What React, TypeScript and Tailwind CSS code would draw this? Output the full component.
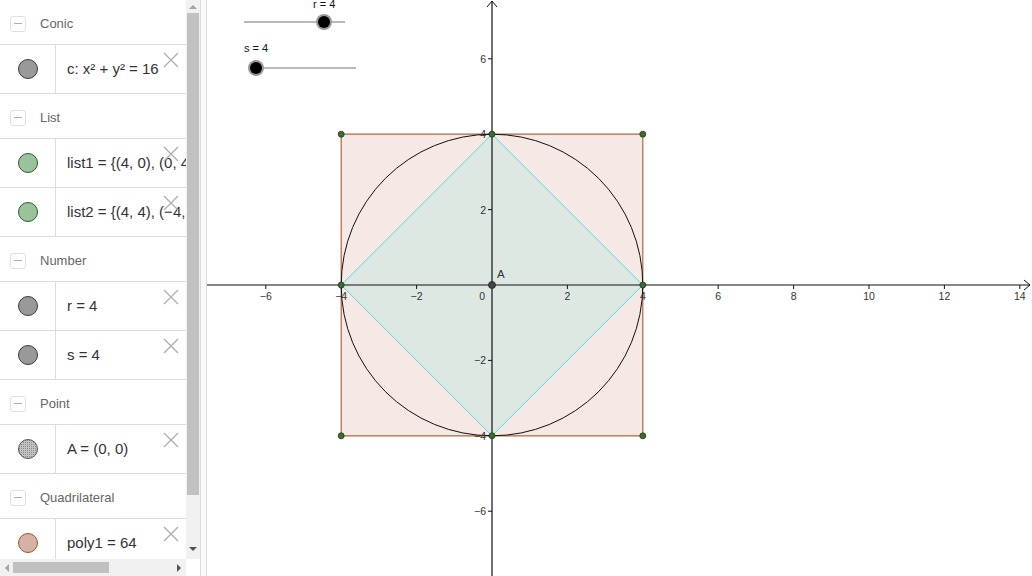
import React from 'react';

type Item = { text: string; fill: string; stroke: string; dotted?: boolean };
type Group = { title: string; items: Item[] };

const groups: Group[] = [
  { title: 'Conic', items: [{ text: 'c: x² + y² = 16', fill: '#999999', stroke: '#3a3a3a' }] },
  {
    title: 'List',
    items: [
      { text: 'list1 = {(4, 0), (0, 4), (−4, 0), (0, −4)}', fill: '#99c499', stroke: '#2e5a2e' },
      { text: 'list2 = {(4, 4), (−4, 4), (−4, −4), (4, −4)}', fill: '#99c499', stroke: '#2e5a2e' },
    ],
  },
  {
    title: 'Number',
    items: [
      { text: 'r = 4', fill: '#999999', stroke: '#3a3a3a' },
      { text: 's = 4', fill: '#999999', stroke: '#3a3a3a' },
    ],
  },
  { title: 'Point', items: [{ text: 'A = (0, 0)', fill: '#b8b8b8', stroke: '#555555', dotted: true }] },
  { title: 'Quadrilateral', items: [{ text: 'poly1 = 64', fill: '#d4b3a6', stroke: '#a0522d' }] },
];

const font = { fontFamily: '"Liberation Sans", Arial, sans-serif' };

const Header: React.FC<{ title: string }> = ({ title }) => (
  <div className="h-[45px] shrink-0 flex items-center pt-[3px] border-b border-[#dddddd]">
    <div className="ml-[10px] w-[16px] h-[16px] border border-[#e0e0e0] rounded-[3px] flex items-center justify-center">
      <div className="w-[8px] h-px bg-[#b0b0b0]" />
    </div>
    <span className="ml-[14px] text-[13px] text-[#666666]">{title}</span>
  </div>
);

const Row: React.FC<{ item: Item }> = ({ item }) => (
  <div className="h-[49px] shrink-0 flex border-b border-[#dddddd] relative">
    <div className="w-[56px] shrink-0 flex items-center justify-center border-r border-[#dddddd]">
      <svg width="22" height="22" viewBox="0 0 22 22">
        {item.dotted && (
          <defs>
            <pattern id="dots" width="2" height="2" patternUnits="userSpaceOnUse">
              <rect width="2" height="2" fill="#c4c4c4" />
              <rect width="1" height="1" fill="#8a8a8a" />
            </pattern>
          </defs>
        )}
        <circle cx="11" cy="11" r="9.5" fill={item.dotted ? 'url(#dots)' : item.fill} stroke={item.stroke} strokeWidth="1" />
      </svg>
    </div>
    <div className="flex-1 overflow-hidden whitespace-nowrap flex items-center pl-[11px] text-[15px] text-[#333333]">
      {item.text}
    </div>
    <svg className="absolute left-[163px] top-[7px]" width="16" height="16" viewBox="0 0 16 16">
      <path d="M1 1 L15 15 M15 1 L1 15" stroke="#b0b0b0" strokeWidth="1.4" />
    </svg>
  </div>
);

const U = 37.7;
const OX = 492;
const OY = 285;
const X = (v: number) => OX + v * U;
const Y = (v: number) => OY - v * U;
const lbl = (v: number) => (v < 0 ? '−' + Math.abs(v) : String(v));

const Graphics: React.FC = () => {
  const xt = [-6, -4, -2, 2, 4, 6, 8, 10, 12, 14];
  const yt = [-6, -4, -2, 2, 4, 6];
  const sq = [[4, 4], [-4, 4], [-4, -4], [4, -4]];
  const dm = [[4, 0], [0, 4], [-4, 0], [0, -4]];
  const pts = (a: number[][]) => a.map(([x, y]) => `${X(x)},${Y(y)}`).join(' ');
  return (
    <svg width="825" height="576" viewBox="207 0 825 576" className="block" style={font}>
      <polygon points={pts(sq)} fill="#f6e8e5" stroke="#b5653a" strokeWidth="1.2" />
      <polygon points={pts(dm)} fill="#dde8e3" stroke="#55dede" strokeWidth="1" />
      <circle cx={X(0)} cy={Y(0)} r={4 * U} fill="none" stroke="#111111" strokeWidth="1" />
      <line x1="207" y1={OY} x2="1030" y2={OY} stroke="#111" strokeWidth="1.2" />
      <path d={`M1024 ${OY - 5} L1030 ${OY} L1024 ${OY + 5}`} fill="none" stroke="#111" strokeWidth="1" />
      <line x1={OX} y1="576" x2={OX} y2="1" stroke="#111" strokeWidth="1.2" />
      <path d={`M${OX - 5} 7 L${OX} 1 L${OX + 5} 7`} fill="none" stroke="#111" strokeWidth="1" />
      {xt.map((v) => (
        <g key={'x' + v}>
          <line x1={X(v)} y1={OY} x2={X(v)} y2={OY + 4} stroke="#111" strokeWidth="1" />
          <text x={X(v)} y={OY + 15} fontSize="10.5" fill="#333" textAnchor="middle">{lbl(v)}</text>
        </g>
      ))}
      {yt.map((v) => (
        <g key={'y' + v}>
          <line x1={OX - 4} y1={Y(v)} x2={OX} y2={Y(v)} stroke="#111" strokeWidth="1" />
          <text x={OX - 6} y={Y(v) + 4} fontSize="10.5" fill="#333" textAnchor="end">{lbl(v)}</text>
        </g>
      ))}
      <text x={OX - 7} y={OY + 15} fontSize="10.5" fill="#333" textAnchor="end">0</text>
      {[...sq, ...dm].map(([x, y], i) => (
        <circle key={i} cx={X(x)} cy={Y(y)} r="3" fill="#3d6b30" stroke="#1f3a18" strokeWidth="0.8" />
      ))}
      <circle cx={OX} cy={OY} r="3.5" fill="#444" stroke="#222" strokeWidth="0.8" />
      <text x={OX + 5} y={OY - 7} fontSize="11.5" fill="#333">A</text>

      <line x1="244" y1="22" x2="345" y2="22" stroke="#777" strokeWidth="1" />
      <circle cx="324" cy="22" r="8" fill="#999" />
      <circle cx="324" cy="22" r="6" fill="#000" />
      <text x="313" y="8" fontSize="11" fill="#111">r = 4</text>

      <text x="244" y="52" fontSize="11" fill="#111">s = 4</text>
      <line x1="256" y1="68" x2="356" y2="68" stroke="#777" strokeWidth="1" />
      <circle cx="256" cy="68" r="8" fill="#999" />
      <circle cx="256" cy="68" r="6" fill="#000" />
    </svg>
  );
};

export default function App() {
  return (
    <div className="w-[1032px] h-[576px] flex overflow-hidden bg-white" style={font}>
      <div className="w-[200px] shrink-0 flex flex-col">
        <div className="flex-1 flex min-h-0">
          <div className="w-[186px] overflow-hidden flex flex-col">
            {groups.map((g) => (
              <React.Fragment key={g.title}>
                <Header title={g.title} />
                {g.items.map((it) => (
                  <Row key={it.text} item={it} />
                ))}
              </React.Fragment>
            ))}
          </div>
          <div className="w-[14px] bg-[#f1f1f1] flex flex-col items-center relative">
            <div className="h-[13px] flex items-center justify-center">
              <div className="w-0 h-0 border-l-[4px] border-r-[4px] border-b-[4px] border-l-transparent border-r-transparent border-b-[#a3a3a3]" />
            </div>
            <div className="w-[12px] h-[482px] bg-[#c1c1c1]" />
            <div className="flex-1 flex items-end justify-center pb-[8px]">
              <div className="w-0 h-0 border-l-[4px] border-r-[4px] border-t-[4px] border-l-transparent border-r-transparent border-t-[#505050]" />
            </div>
          </div>
        </div>
        <div className="h-[17px] shrink-0 flex">
          <div className="w-[186px] bg-[#f1f1f1] flex items-center">
            <div className="w-[13px] flex justify-center">
              <div className="w-0 h-0 border-t-[4px] border-b-[4px] border-r-[4px] border-t-transparent border-b-transparent border-r-[#a3a3a3]" />
            </div>
            <div className="w-[96px] h-[11px] bg-[#c1c1c1]" />
            <div className="flex-1 flex justify-end pr-[5px]">
              <div className="w-0 h-0 border-t-[4px] border-b-[4px] border-l-[4px] border-t-transparent border-b-transparent border-l-[#505050]" />
            </div>
          </div>
          <div className="w-[14px] bg-white" />
        </div>
      </div>
      <div className="w-[7px] shrink-0 border-l border-r border-[#dddddd] bg-[#fafafa]" />
      <div className="flex-1 relative">
        <Graphics />
      </div>
    </div>
  );
}
